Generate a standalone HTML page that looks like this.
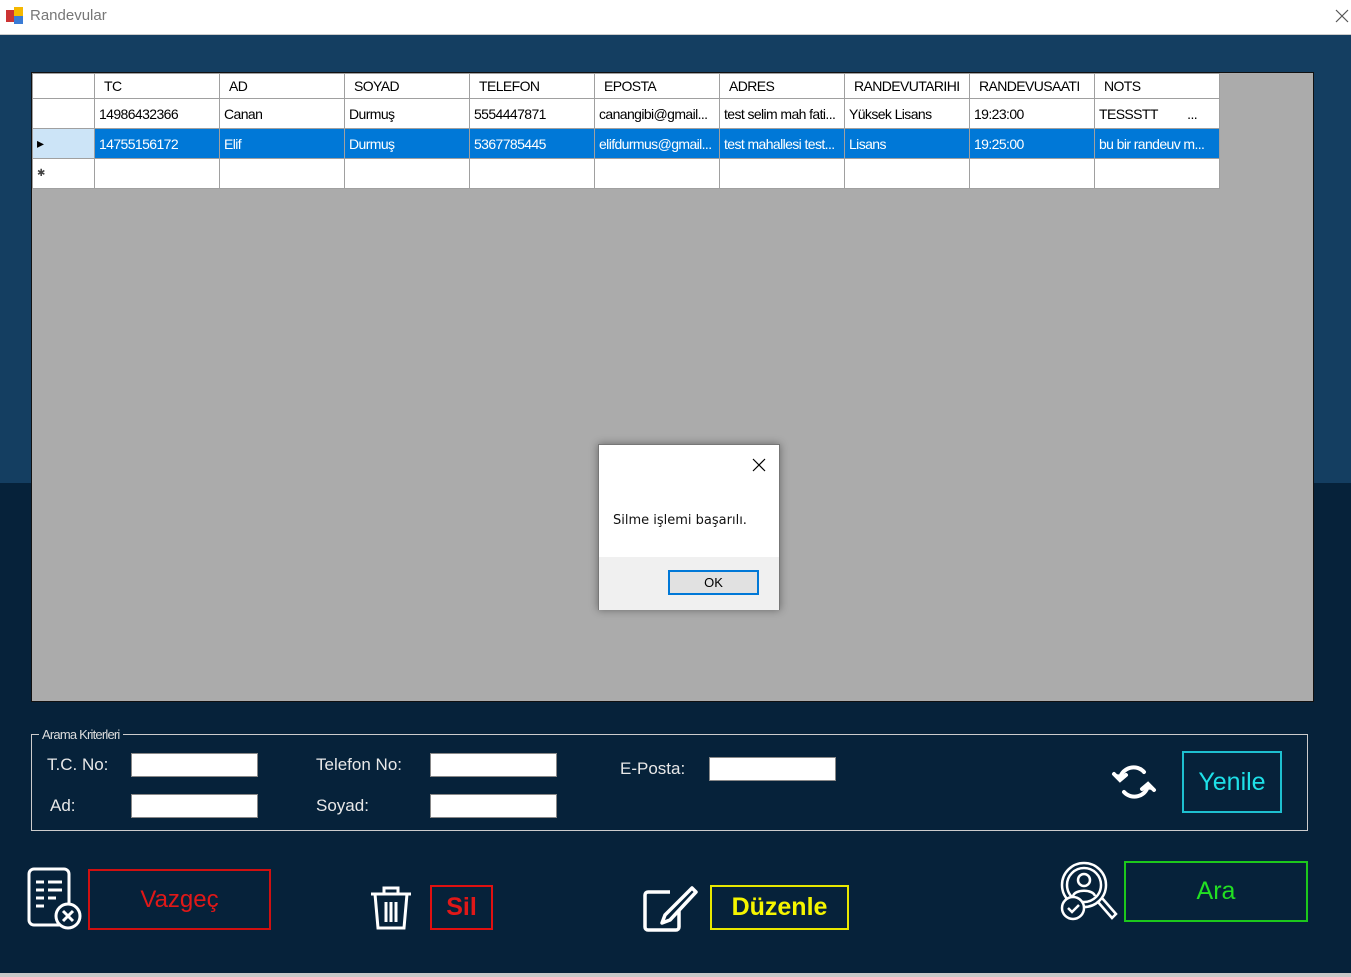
<!DOCTYPE html>
<html><head><meta charset="utf-8"><style>
*{margin:0;padding:0;box-sizing:border-box}
body{width:1351px;height:977px;overflow:hidden;position:relative;font-family:"Liberation Sans",sans-serif;background:#06223a}
.abs{position:absolute}
.title{left:0;top:0;width:1351px;height:35px;background:#fff;border-bottom:1px solid #ccc}
.top{left:0;top:35px;width:1351px;height:448px;background:#143e61}
.bot{left:0;top:483px;width:1351px;height:490px;background:#06223a}
.grid{left:31px;top:72px;width:1283px;height:630px;background:#ababab;border:1px solid #111}
table{border-collapse:collapse;position:absolute;left:0;top:0;font-size:14px;letter-spacing:-0.6px}
td{height:30px;border:1px solid #a0a0a0;background:#fff;padding:0 4px;white-space:nowrap;overflow:hidden;width:125px;max-width:125px;color:#000}
tr.h td{height:25px;padding-left:9px}
td.rh{width:62px;max-width:62px;background:#fff}
tr.sel td{background:#0078d7;color:#fff}
tr.sel td.rh{background:#cce4f7;color:#000}
.lbl{color:#e8e8e8;font-size:17px}
.inp{background:#fff;border:1px solid #888;width:127px;height:24px}
.btn{border:2px solid;display:flex;align-items:center;justify-content:center}
</style></head><body>
<div class="abs title"></div>
<svg class="abs" style="left:6px;top:7px" width="18" height="18"><rect x="0" y="3" width="9" height="12" fill="#c33"/><rect x="8" y="0" width="9" height="9" fill="#f5b800"/><rect x="8" y="9" width="9" height="8" fill="#3a7bd5"/></svg>
<div class="abs" style="left:30px;top:7px;font-size:15px;color:#777">Randevular</div>
<svg class="abs" style="left:1335px;top:9px" width="14" height="14"><path d="M1 1L13 13M13 1L1 13" stroke="#555" stroke-width="1.2"/></svg>
<div class="abs top"></div><div class="abs bot"></div>
<div class="abs" style="left:0;top:973px;width:1351px;height:4px;background:#c8c8c8"></div>
<div class="abs grid">
<table>
<tr class="h"><td class="rh"></td><td>TC</td><td>AD</td><td>SOYAD</td><td>TELEFON</td><td>EPOSTA</td><td>ADRES</td><td>RANDEVUTARIHI</td><td>RANDEVUSAATI</td><td>NOTS</td></tr>
<tr><td class="rh"></td><td>14986432366</td><td>Canan</td><td>Durmuş</td><td>5554447871</td><td>canangibi@gmail...</td><td>test selim mah fati...</td><td>Yüksek Lisans</td><td>19:23:00</td><td>TESSSTT &nbsp; &nbsp; &nbsp; &nbsp; ...</td></tr>
<tr class="sel"><td class="rh">▸</td><td>14755156172</td><td>Elif</td><td>Durmuş</td><td>5367785445</td><td>elifdurmus@gmail...</td><td>test mahallesi test...</td><td>Lisans</td><td>19:25:00</td><td>bu bir randeuv m...</td></tr>
<tr><td class="rh" style="font-size:10px;color:#444">✱</td><td></td><td></td><td></td><td></td><td></td><td></td><td></td><td></td><td></td></tr>
</table>
</div>
<div class="abs" style="left:598px;top:444px;width:182px;height:166px;background:#fff;border:1px solid #777;box-shadow:0 0 8px rgba(0,0,0,.4)">
<svg class="abs" style="left:153px;top:13px" width="14" height="14"><path d="M1 1L13 13M13 1L1 13" stroke="#000" stroke-width="1.2"/></svg>
<div class="abs" style="left:14px;top:68px;font-size:13px;font-family:'DejaVu Sans',sans-serif;color:#111">Silme işlemi başarılı.</div>
<div class="abs" style="left:0;top:112px;width:180px;height:53px;background:#f0f0f0"></div>
<div class="abs" style="left:69px;top:125px;width:91px;height:25px;background:#e1e1e1;border:2px solid #0078d7;font-size:13px;text-align:center;line-height:21px">OK</div>
</div>
<div class="abs" style="left:31px;top:734px;width:1277px;height:97px;border:1px solid #ccc"></div>
<div class="abs" style="left:39px;top:727px;background:#06223a;color:#ddd;font-size:13px;padding:0 3px;letter-spacing:-0.8px">Arama Kriterleri</div>
<div class="abs lbl" style="left:47px;top:755px">T.C. No:</div>
<div class="abs inp" style="left:131px;top:753px"></div>
<div class="abs lbl" style="left:50px;top:796px">Ad:</div>
<div class="abs inp" style="left:131px;top:794px"></div>
<div class="abs lbl" style="left:316px;top:755px">Telefon No:</div>
<div class="abs inp" style="left:430px;top:753px"></div>
<div class="abs lbl" style="left:316px;top:796px">Soyad:</div>
<div class="abs inp" style="left:430px;top:794px"></div>
<div class="abs lbl" style="left:620px;top:759px">E-Posta:</div>
<div class="abs inp" style="left:709px;top:757px"></div>
<svg class="abs" style="left:1110px;top:760px" width="48" height="44" fill="none" stroke="#fff" stroke-width="4" stroke-linecap="round"><path d="M10 18A14 14 0 0 1 34 12"/><path d="M38 26A14 14 0 0 1 14 32"/><path d="M4 14l6 6 6-5" fill="#fff"/><path d="M44 30l-6-6-6 5" fill="#fff"/></svg>
<div class="abs btn" style="left:1182px;top:751px;width:100px;height:62px;border-color:#1ec0d0;color:#1ee0e8;font-size:25px">Yenile</div>
<svg class="abs" style="left:26px;top:866px" width="58" height="66" fill="none" stroke="#fff" stroke-width="3"><rect x="3" y="3" width="40" height="56" rx="5"/><path d="M10 16h8M22 16h14M10 24h8M22 24h14M10 32h8M22 32h8M10 40h8"/><circle cx="42" cy="50" r="12" fill="#06223a"/><path d="M37 45l10 10M47 45l-10 10"/></svg>
<div class="abs btn" style="left:88px;top:869px;width:183px;height:61px;border-color:#d01010;color:#e01818;font-size:24px">Vazgeç</div>
<svg class="abs" style="left:368px;top:884px" width="46" height="48" fill="none" stroke="#fff" stroke-width="3"><path d="M3 10h40M16 10V4h14v6M7 10l3 34h26l3-34M18 18v20M23 18v20M28 18v20"/></svg>
<div class="abs btn" style="left:430px;top:885px;width:63px;height:45px;border-color:#e01010;color:#e01818;font-size:25px;font-weight:bold">Sil</div>
<svg class="abs" style="left:642px;top:884px" width="56" height="48" fill="none" stroke="#fff" stroke-width="3.5" stroke-linejoin="round"><path d="M28 8H6a3 3 0 0 0-3 3v32a3 3 0 0 0 3 3h28a3 3 0 0 0 3-3V26"/><path d="M50 4l4 4-26 28-8 3 3-8z"/></svg>
<div class="abs btn" style="left:710px;top:885px;width:139px;height:45px;border-color:#e8e800;color:#f5f500;font-size:25px;font-weight:bold">Düzenle</div>
<svg class="abs" style="left:1058px;top:860px" width="62" height="64" fill="none" stroke="#fff" stroke-width="2.5"><circle cx="26" cy="25" r="22"/><circle cx="26" cy="25" r="17"/><circle cx="26" cy="20" r="6"/><path d="M15 36c2-7 20-7 22 0"/><path d="M40 42l14 16 4-4-14-16"/><circle cx="15" cy="48" r="11" fill="#06223a"/><path d="M10 48l4 4 7-7"/></svg>
<div class="abs btn" style="left:1124px;top:861px;width:184px;height:61px;border-color:#1cc81c;color:#22e022;font-size:25px">Ara</div>
</body></html>
